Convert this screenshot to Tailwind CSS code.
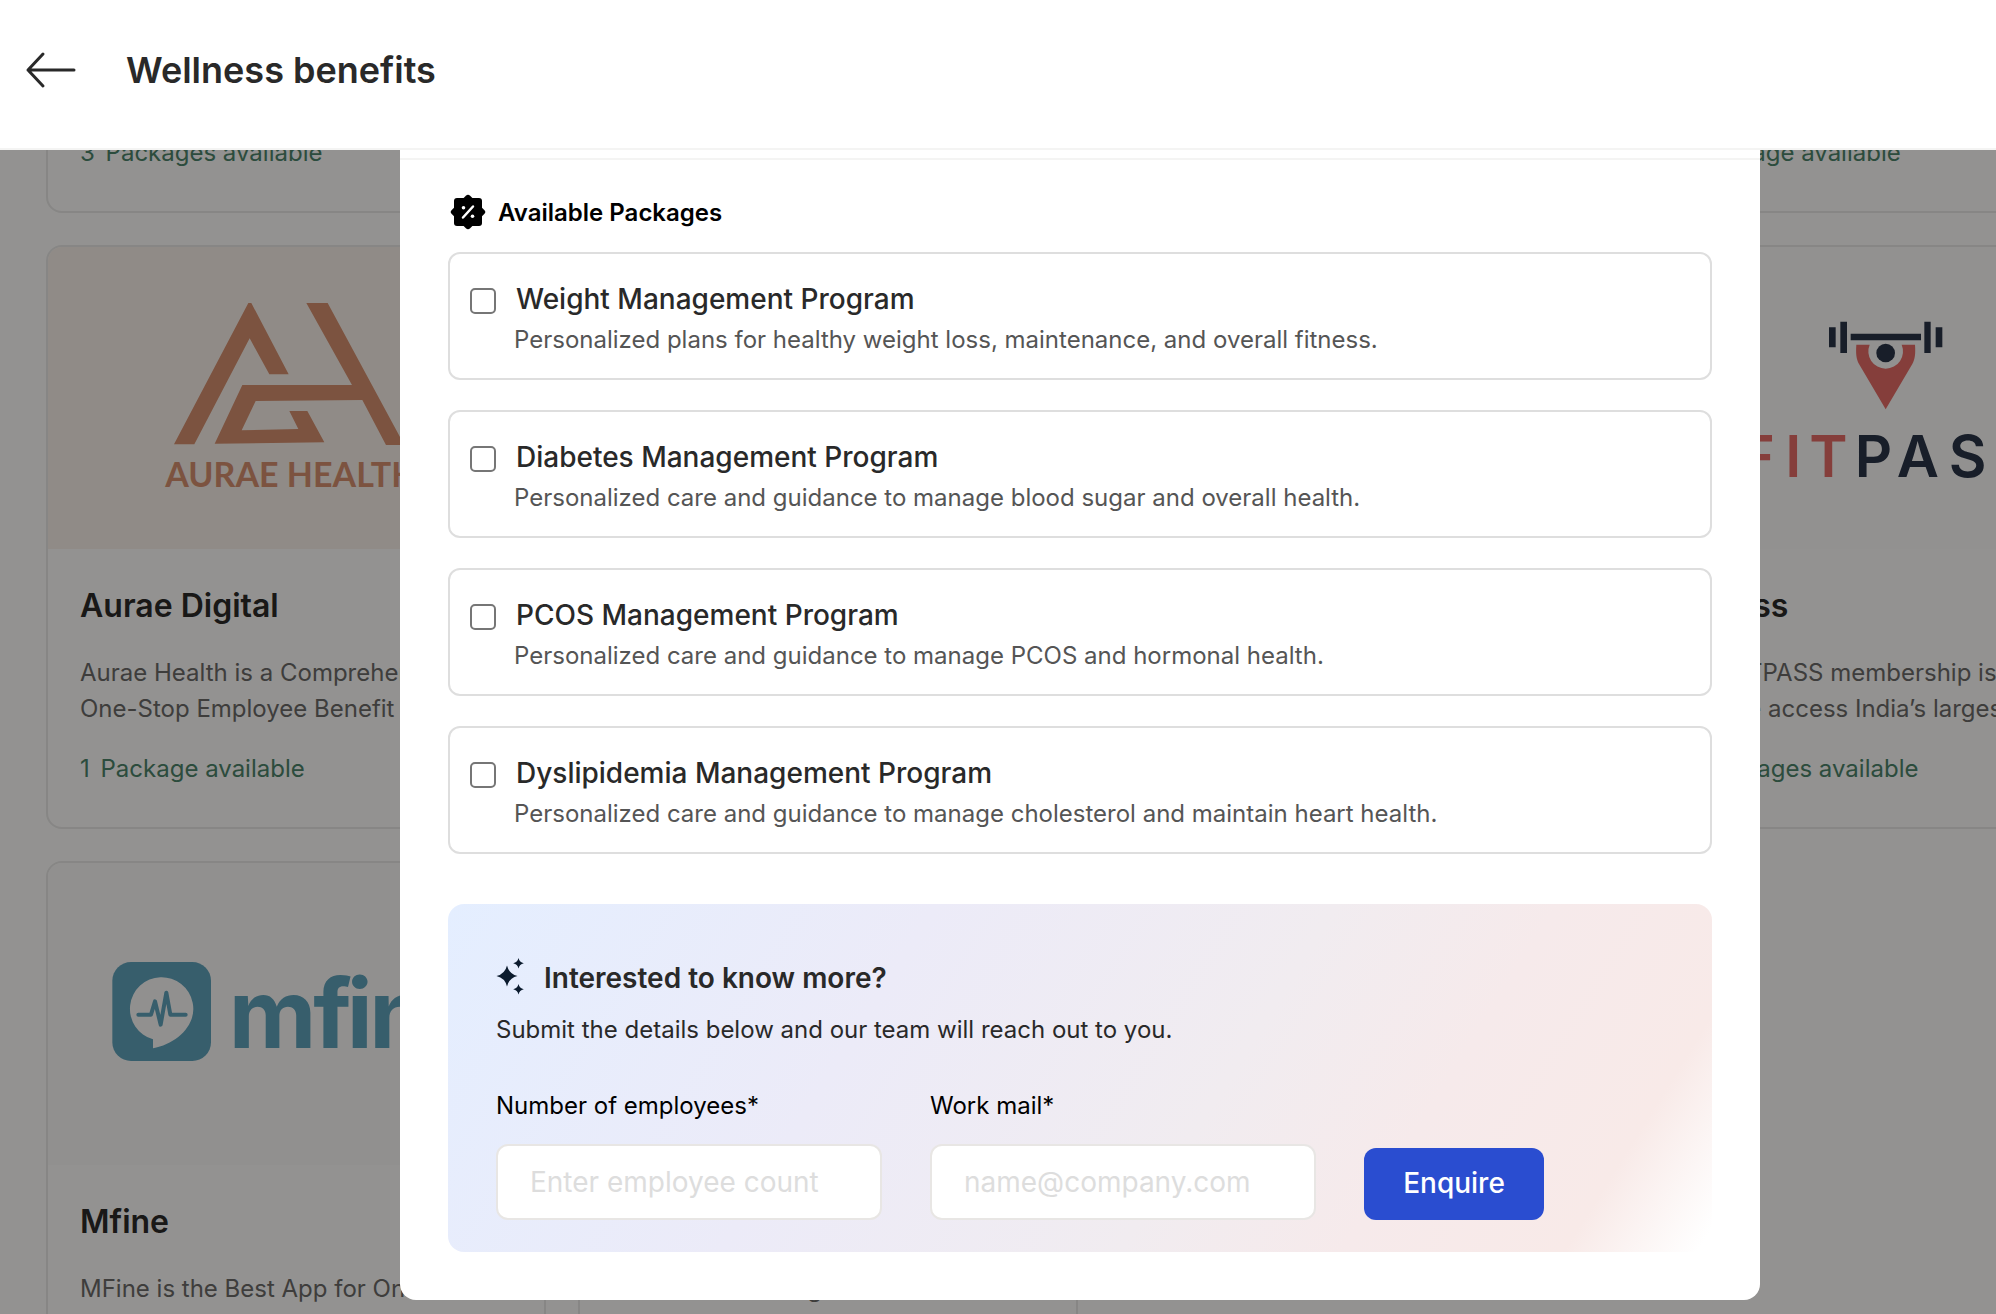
<!DOCTYPE html>
<html lang="en">
<head>
  <meta charset="UTF-8">
  <meta name="viewport" content="width=device-width, initial-scale=1.0">
  <title>Wellness benefits</title>
  <script src="https://cdn.jsdelivr.net/npm/@tailwindcss/browser@4"></script>
</head>
<body class="h-screen flex flex-col overflow-hidden bg-[#fdfcfa] font-['Inter',sans-serif] text-2xl/9 text-[#6b6a68]">

  <header class="relative z-20 shrink-0 h-[150px] pl-6 pb-2 flex items-center gap-12 bg-white border-b-2 border-[#f4f4f3]">
    <button type="button" aria-label="Back" class="text-[#292929]">
      <svg class="w-[54px] h-10" viewBox="0 0 54 40" fill="none" stroke="currentColor" stroke-width="3" stroke-linecap="round" stroke-linejoin="round"><path d="M50 20H4M19 4 4 20l15 16"/></svg>
    </button>
    <h1 class="text-4xl font-semibold text-[#292929]">Wellness benefits</h1>
  </header>

  <main class="relative flex-1 overflow-hidden">

    <!-- provider cards, scrolled up under the header -->
    <div class="-mt-[521px] pl-[46px] grid grid-cols-[repeat(4,500px)] auto-rows-[584px] gap-8">
      <article class="flex flex-col justify-end border-2 border-[#e8e7e5] rounded-2xl px-8 pb-10">
        <p class="text-[#4c8369]"><span class="mr-1">3</span> Packages available</p>
      </article>
      <article class="border-2 border-[#e8e7e5] rounded-2xl"></article>
      <article class="border-2 border-[#e8e7e5] rounded-2xl"></article>
      <article class="flex flex-col justify-end border-2 border-[#e8e7e5] rounded-2xl px-8 pb-10">
        <p class="text-[#4c8369]"><span class="mr-1">1</span> Package available</p>
      </article>

      <article class="border-2 border-[#e8e7e5] rounded-2xl overflow-hidden">
        <svg class="block w-full h-[302px] bg-[#f9f0e8]" viewBox="144 51 1488 906" role="img" aria-label="Aurae Health">
          <g fill="#d68f6e">
            <path d="M522 643 745 219h9L866 433h-58L749 325 583 643z"/>
            <path d="M919 219h64l230 426h-55l-71-135-320 3-42 88 170-4-27-54h54l51 94-329 4 83-176h329z"/>
            <text x="496" y="771" font-size="102" font-weight="700" font-family="Lato, sans-serif">AURAE HEALTH</text>
          </g>
        </svg>
        <div class="px-8 pt-[37px]">
          <h2 class="text-[32px]/10 font-semibold text-[#2b2a29]">Aurae Digital</h2>
          <p class="mt-[29px]">Aurae Health is a Comprehensive<br>One-Stop Employee Benefit Solution</p>
          <p class="mt-6 text-[#4c8369]"><span class="mr-1">1</span> Package available</p>
        </div>
      </article>
      <article class="border-2 border-[#e8e7e5] rounded-2xl"></article>
      <article class="border-2 border-[#e8e7e5] rounded-2xl"></article>
      <article class="border-2 border-[#e8e7e5] rounded-2xl overflow-hidden">
        <svg class="block w-full h-[302px] bg-[#fbfaf8]" viewBox="-168 321 1488 906" role="img" aria-label="Fitpass">
          <g fill="#2a3447">
            <path d="M387 562h20v60h-20zM421 545h20v94h-20zM452 581h211v20H452zM673 545h19v94h-19zM707 562h20v60h-20z"/>
            <circle cx="557" cy="639" r="28"/>
          </g>
          <path fill="#e66c66" d="M469 614h40a52 52 0 1 0 96 0h40c2 26 0 44-8 58l-80 136-80-136c-8-14-10-32-8-58z"/>
          <g font-size="174" font-weight="600">
            <text x="122 256 328" y="1011" fill="#e66c66">FIT</text>
            <text x="464 590 746 880" y="1011" fill="#2a3447">PASS</text>
          </g>
        </svg>
        <div class="px-8 pt-[37px]">
          <h2 class="text-[32px]/10 font-semibold text-[#2b2a29]">Fitpass</h2>
          <p class="mt-[29px] whitespace-nowrap">The FITPASS membership is a<br>provide access India’s largest</p>
          <p class="mt-6 text-[#4c8369]"><span class="mr-1">3</span> Packages available</p>
        </div>
      </article>

      <article class="border-2 border-[#e8e7e5] rounded-2xl overflow-hidden">
        <svg class="block w-full h-[302px] bg-[#faf9f7]" viewBox="144 39 1488 906" role="img" aria-label="mfine">
          <rect x="337" y="336" width="296" height="297" rx="56" fill="#60a2ba"/>
          <path fill="#faf9f7" d="M459 568a95 95 0 1 1 119-110c14 66-48 124-119 137z"/>
          <path d="M415 494h38l12-40 17 70 17-96 12 66h46" fill="none" stroke="#60a2ba" stroke-width="12" stroke-linecap="round" stroke-linejoin="round"/>
          <text x="686 940 1040 1108 1286" y="595" font-size="288" font-weight="700" fill="#60a2ba">mfine</text>
        </svg>
        <div class="px-8 pt-[37px]">
          <h2 class="text-[32px]/10 font-semibold text-[#2b2a29]">Mfine</h2>
          <p class="mt-[29px]">MFine is the Best App for Online<br>Doctor Consultation</p>
        </div>
      </article>
      <article class="border-2 border-[#e8e7e5] rounded-2xl px-8 pt-[408px]">
        <p>Holistic well-being and care</p>
      </article>
    </div>

    <!-- overlay + modal -->
    <div class="absolute inset-0 z-10 flex items-start bg-black/42 pl-[400px] pr-[236px]">
      <section role="dialog" aria-label="Available Packages" class="flex-1 bg-white rounded-b-2xl pb-12">
        <div class="h-[10px] border-b-2 border-[#f4f4f3]"></div>

        <div class="px-12 pt-[34px]">
          <h2 class="flex items-center gap-3 text-2xl/9 font-semibold text-black">
            <svg class="size-[38px]" viewBox="-20 -18 38 38">
              <rect x="-14" y="-14" width="28" height="28" rx="3"/>
              <rect x="-13" y="-13" width="26" height="26" rx="3" transform="rotate(45)"/>
              <path d="M-5 5.500 5-5.500" stroke="#fff" stroke-width="2.500" stroke-linecap="round"/>
              <circle cx="-4.500" cy="-4.300" r="1.800" fill="#fff"/>
              <circle cx="4.500" cy="4.300" r="1.800" fill="#fff"/>
            </svg>
            Available Packages
          </h2>

          <div class="mt-5 grid gap-[30px]">
            <label class="flex gap-[18px] h-32 pl-5 pt-[27px] border-2 border-[#dedede] rounded-xl">
              <input type="checkbox" class="appearance-none shrink-0 mt-[7px] size-[26px] border-2 border-[#767676] rounded-[5px] bg-white">
              <span>
                <span class="block pl-0.5 text-[28px]/9 font-medium text-[#292929]">Weight Management Program</span>
                <span class="block mt-[5px] text-[#555555]">Personalized plans for healthy weight loss, maintenance, and overall fitness.</span>
              </span>
            </label>
            <label class="flex gap-[18px] h-32 pl-5 pt-[27px] border-2 border-[#dedede] rounded-xl">
              <input type="checkbox" class="appearance-none shrink-0 mt-[7px] size-[26px] border-2 border-[#767676] rounded-[5px] bg-white">
              <span>
                <span class="block pl-0.5 text-[28px]/9 font-medium text-[#292929]">Diabetes Management Program</span>
                <span class="block mt-[5px] text-[#555555]">Personalized care and guidance to manage blood sugar and overall health.</span>
              </span>
            </label>
            <label class="flex gap-[18px] h-32 pl-5 pt-[27px] border-2 border-[#dedede] rounded-xl">
              <input type="checkbox" class="appearance-none shrink-0 mt-[7px] size-[26px] border-2 border-[#767676] rounded-[5px] bg-white">
              <span>
                <span class="block pl-0.5 text-[28px]/9 font-medium text-[#292929]">PCOS Management Program</span>
                <span class="block mt-[5px] text-[#555555]">Personalized care and guidance to manage PCOS and hormonal health.</span>
              </span>
            </label>
            <label class="flex gap-[18px] h-32 pl-5 pt-[27px] border-2 border-[#dedede] rounded-xl">
              <input type="checkbox" class="appearance-none shrink-0 mt-[7px] size-[26px] border-2 border-[#767676] rounded-[5px] bg-white">
              <span>
                <span class="block pl-0.5 text-[28px]/9 font-medium text-[#292929]">Dyslipidemia Management Program</span>
                <span class="block mt-[5px] text-[#555555]">Personalized care and guidance to manage cholesterol and maintain heart health.</span>
              </span>
            </label>
          </div>

          <form class="mt-[50px] px-12 pt-[52px] pb-8 rounded-2xl bg-[linear-gradient(122deg,#e4eeff_0%,#ecebf8_33%,#f1ecf0_60%,#f6eaeb_75%,#f8eae8_90%,#ffffff_99%)]">
            <h3 class="flex items-start gap-5 text-[28px]/11 font-semibold text-[#292929]">
              <svg class="w-7 h-10" viewBox="0 0 28 40" fill="#0b1b2e">
                <path d="M11 9.500q2 8.500 10.500 10.500Q13 22 11 30.500 9 22 .500 20 9 18 11 9.500z"/>
                <path d="M22.500 2q1 4.300 5.300 5.300-4.300 1-5.300 5.300-1-4.300-5.300-5.300 4.300-1 5.300-5.300zM22.500 28q1 4.300 5.300 5.300-4.300 1-5.300 5.300-1-4.300-5.300-5.300 4.300-1 5.300-5.300z"/>
              </svg>
              Interested to know more?
            </h3>
            <p class="mt-3 text-[#292929]">Submit the details below and our team will reach out to you.</p>
            <div class="mt-10 flex items-end gap-12 text-black">
              <div class="w-[386px]">
                <label for="employees" class="block">Number of employees*</label>
                <input id="employees" type="text" placeholder="Enter employee count" class="block mt-5 w-full h-[76px] px-8 text-[28px] bg-white border-2 border-[#e8e6e4] rounded-xl placeholder:text-[#dddddd]">
              </div>
              <div class="w-[386px]">
                <label for="mail" class="block">Work mail*</label>
                <input id="mail" type="email" placeholder="name@company.com" class="block mt-5 w-full h-[76px] px-8 text-[28px] bg-white border-2 border-[#e8e6e4] rounded-xl placeholder:text-[#dddddd]">
              </div>
              <button type="submit" class="w-[180px] h-[72px] pb-0.5 rounded-xl bg-[#2a4dd0] text-[28px] font-medium text-white">Enquire</button>
            </div>
          </form>
        </div>
      </section>
    </div>
  </main>

</body>
</html>
